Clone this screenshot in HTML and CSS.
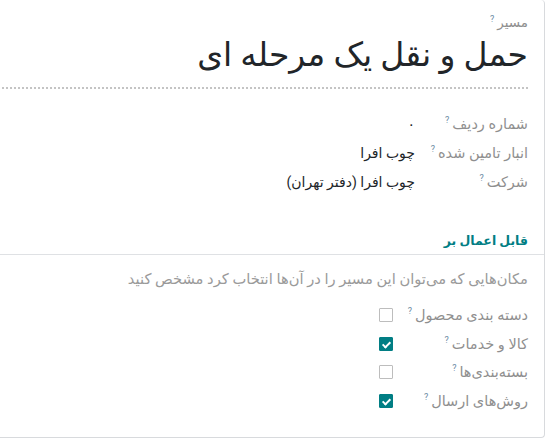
FILE: index.html
```html
<!DOCTYPE html>
<html lang="fa" dir="rtl">
<head>
  <meta charset="UTF-8">
  <title>مسیر</title>
  <link rel="stylesheet" href="styles.css">
</head>
<body>
  <div class="sheet">
    <!-- عنوان -->
    <div class="title-block">
      <label class="field-label">مسیر<sup>?</sup></label>
      <h1 class="route-name">حمل و نقل یک مرحله ای</h1>
    </div>

    <!-- فیلدها -->
    <div class="fields">
      <div class="row">
        <label class="field-label">شماره ردیف<sup>?</sup></label>
        <span class="value">۰</span>
      </div>
      <div class="row">
        <label class="field-label">انبار تامین شده<sup>?</sup></label>
        <span class="value">چوب افرا</span>
      </div>
      <div class="row">
        <label class="field-label">شرکت<sup>?</sup></label>
        <span class="value">چوب افرا (دفتر تهران)</span>
      </div>
    </div>

    <!-- قابل اعمال بر -->
    <div class="group-title">قابل اعمال بر</div>
    <div class="group-body">
      <p class="hint">مکان‌هایی که می‌توان این مسیر را در آن‌ها انتخاب کرد مشخص کنید</p>

      <div class="check-row">
        <label class="field-label">دسته بندی محصول<sup>?</sup></label>
        <span class="box"></span>
      </div>
      <div class="check-row">
        <label class="field-label">کالا و خدمات<sup>?</sup></label>
        <span class="box checked"></span>
      </div>
      <div class="check-row">
        <label class="field-label">بسته‌بندی‌ها<sup>?</sup></label>
        <span class="box"></span>
      </div>
      <div class="check-row">
        <label class="field-label">روش‌های ارسال<sup>?</sup></label>
        <span class="box checked"></span>
      </div>
    </div>
  </div>
</body>
</html>
```

FILE: styles.css
```css
/* کلی */
body {
  margin: 0;
  background: #fff;
  font-family: Roboto, "DejaVu Sans", sans-serif;
  color: #212529;
  overflow: hidden;
}

.sheet {
  width: 640px;
  margin-right: 1px;
  border: 1px solid #d8dadd;
  border-top: none;
  border-radius: 0 4px 4px 4px;
  min-height: 438px;
  box-sizing: border-box;
}

/* عنوان */
.title-block {
  padding: 12px 16px 0 0;
}

.field-label {
  font-size: 14.5px;
  color: #8f8f8f;
}

.field-label sup {
  font-size: 9px;
  color: #6b8aa3;
  margin-right: 3px;
}

.title-block .field-label {
  font-size: 13.5px;
}

.route-name {
  margin: 0;
  font-size: 33px;
  font-weight: normal;
  line-height: 48px;
  padding-bottom: 8px;
  border-bottom: 2px dotted #c4c4c4;
}

/* فیلدها */
.fields {
  padding: 20px 16px 0 0;
}

.row {
  display: flex;
  align-items: center;
  height: 29px;
}

.row .field-label {
  width: 113px;
}

.value {
  font-size: 14px;
}

/* گروه */
.group-title {
  margin-top: 37px;
  padding: 0 16px 6px 0;
  font-size: 12.5px;
  font-weight: bold;
  color: #017e84;
  border-bottom: 1px solid #dfe1e4;
}

.group-body {
  padding: 0 16px 0 0;
}

.hint {
  margin: 15px 0 13px;
  font-size: 14.7px;
  color: #9a9a9a;
}

.check-row {
  display: flex;
  align-items: center;
  height: 28.5px;
}

.check-row .field-label {
  width: 135px;
}

.box {
  width: 12px;
  height: 12px;
  border: 1px solid #bdbdbd;
  border-radius: 1px;
  position: relative;
}

.box.checked {
  background: #017e84;
  border-color: #017e84;
}

.box.checked::after {
  content: "";
  position: absolute;
  left: 4px;
  top: 2px;
  width: 3px;
  height: 6px;
  border: solid #fff;
  border-width: 0 2px 2px 0;
  transform: rotate(45deg);
}
```
